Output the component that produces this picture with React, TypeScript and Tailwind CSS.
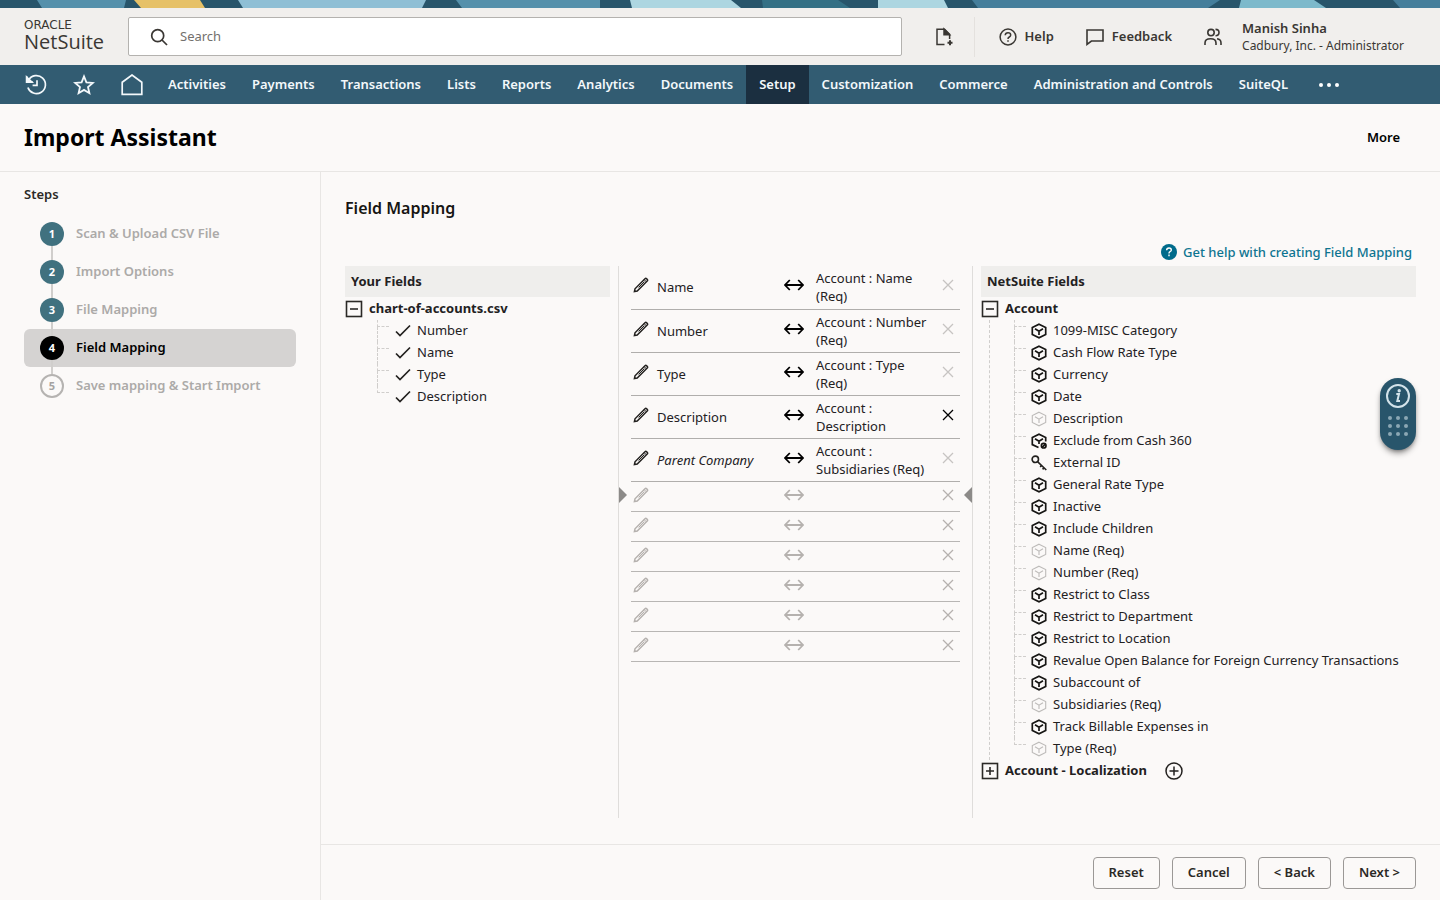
import type { ReactNode } from 'react';

const NAV_ITEMS = [
  'Activities', 'Payments', 'Transactions', 'Lists', 'Reports', 'Analytics', 'Documents',
  'Setup', 'Customization', 'Commerce', 'Administration and Controls', 'SuiteQL',
];

const STEPS = [
  'Scan & Upload CSV File', 'Import Options', 'File Mapping', 'Field Mapping', 'Save mapping & Start Import',
];
const CURRENT_STEP = 4;

const CSV_FIELDS = ['Number', 'Name', 'Type', 'Description'];

type Mapping = { source: string; target: string; custom?: boolean; removable?: boolean };

const MAPPINGS: Mapping[] = [
  { source: 'Name', target: 'Account : Name (Req)' },
  { source: 'Number', target: 'Account : Number (Req)' },
  { source: 'Type', target: 'Account : Type (Req)' },
  { source: 'Description', target: 'Account : Description', removable: true },
  { source: 'Parent Company', target: 'Account : Subsidiaries (Req)', custom: true },
];
const EMPTY_ROWS = [1, 2, 3, 4, 5, 6];

type Field = { name: string; kind?: 'used' | 'excluded' | 'key' };

const ACCOUNT_FIELDS: Field[] = [
  { name: '1099-MISC Category' },
  { name: 'Cash Flow Rate Type' },
  { name: 'Currency' },
  { name: 'Date' },
  { name: 'Description', kind: 'used' },
  { name: 'Exclude from Cash 360', kind: 'excluded' },
  { name: 'External ID', kind: 'key' },
  { name: 'General Rate Type' },
  { name: 'Inactive' },
  { name: 'Include Children' },
  { name: 'Name (Req)', kind: 'used' },
  { name: 'Number (Req)', kind: 'used' },
  { name: 'Restrict to Class' },
  { name: 'Restrict to Department' },
  { name: 'Restrict to Location' },
  { name: 'Revalue Open Balance for Foreign Currency Transactions' },
  { name: 'Subaccount of' },
  { name: 'Subsidiaries (Req)', kind: 'used' },
  { name: 'Track Billable Expenses in' },
  { name: 'Type (Req)', kind: 'used' },
];

function Banner() {
  return (
    <svg className="block h-2 w-full" viewBox="0 0 1440 8" preserveAspectRatio="none" aria-hidden="true">
      <rect width="1440" height="8" fill="#28556b" />
      <path d="M37 0H126L124 8H42Z" fill="#5590ab" />
      <path d="M134 0H200L205 8H141Z" fill="#e6c168" />
      <path d="M238 0H426L422 8H243Z" fill="#8fbfd5" />
      <path d="M456 0H600V8H462Z" fill="#5590ab" />
      <path d="M630 0H731L741 8H632Z" fill="#add6e1" />
      <path d="M762 0H838L850 8H763Z" fill="#347085" />
      <path d="M878 0H944L948 8H878Z" fill="#add6e1" />
      <path d="M972 0H1220L1208 8H978Z" fill="#457e9b" />
      <path d="M1241 0H1314L1326 8H1239Z" fill="#7db9cb" />
      <path d="M1393 0H1440V8H1400Z" fill="#457e9b" />
    </svg>
  );
}

function Stroke({ children, className, width = 1.5, box = '0 0 20 20' }: { children: ReactNode; className: string; width?: number; box?: string }) {
  return (
    <svg viewBox={box} className={className} fill="none" stroke="currentColor" strokeWidth={width} aria-hidden="true">
      {children}
    </svg>
  );
}

function Pencil() {
  return (
    <Stroke className="size-4" box="0 0 16 16" width={1.5}>
      <path d="M1.4 14.6L2 11.8L12 1.8Q12.8 1 13.6 1.8L14.2 2.4Q15 3.2 14.2 4L4.2 14Z" />
      <path d="M11.4 4.6L5.6 10.4" strokeWidth="1" />
      <path d="M11.2 2.6L13.4 4.8" strokeWidth="1" />
    </Stroke>
  );
}

function DoubleArrow() {
  return (
    <Stroke className="h-3 w-5" box="0 0 20 12" width={1.8}>
      <path d="M1.3 6H18.7M5.8 1L1 6L5.8 11M14.2 1L19 6L14.2 11" />
    </Stroke>
  );
}

function Cross() {
  return (
    <Stroke className="size-3" box="0 0 12 12" width={1.3}>
      <path d="M1 1L11 11M11 1L1 11" />
    </Stroke>
  );
}

function FieldIcon({ kind }: { kind?: Field['kind'] }) {
  if (kind === 'key') {
    return (
      <Stroke className="size-4" box="0 0 16 16" width={1.6}>
        <circle cx="4.3" cy="4.3" r="3.2" />
        <path d="M6.8 6.8L15.3 15M10.6 10.4L9.2 12M13 12.8L11.6 14.4" />
      </Stroke>
    );
  }
  const used = kind === 'used';
  return (
    <span className={used ? 'text-[#bdbbb9]' : 'text-[#161513]'}>
      <Stroke className="size-4" box="0 0 16 16" width={used ? 1.1 : 1.7}>
        {kind === 'excluded' ? (
          <>
            <path d="M7.5 14.6L1.3 11.6V4.5L8 1.2L14.7 4.5V8.5M4 5.8L8 8.2L12 5.8M8 8.2V11" />
            <circle cx="12.7" cy="12.7" r="2.3" />
            <path d="M11.1 14.3L14.3 11.1" />
          </>
        ) : (
          <path d="M8 1.2L14.7 4.6V11.4L8 14.8L1.3 11.4V4.6ZM4 5.8L8 8.2L12 5.8M8 8.2V12" />
        )}
      </Stroke>
    </span>
  );
}

function BoxToggle({ open, label }: { open: boolean; label: string }) {
  return (
    <button type="button" aria-label={label} aria-expanded={open} className="text-[#2b2926]">
      <Stroke className="size-[18px]" box="0 0 18 18" width={1.6}>
        <rect x="1.5" y="1.5" width="15" height="15" />
        <path d={open ? 'M5 9H13' : 'M5 9H13M9 5V13'} />
      </Stroke>
    </button>
  );
}

function Branch({ last }: { last: boolean }) {
  return (
    <span className="flex w-3 flex-col self-stretch" aria-hidden="true">
      <span className="h-[7px] border-b border-l border-dashed border-[#d0cecc]" />
      {!last && <span className="flex-1 border-l border-dashed border-[#d0cecc]" />}
    </span>
  );
}

function Header() {
  return (
    <header className="flex h-[57px] items-center bg-[#f1efed] pr-9 pl-6 text-[#3a3733]">
      <a href="#home" className="flex w-[104px] shrink-0 flex-col pb-1 text-[#3a3733]">
        <span className="font-['DejaVu_Sans'] text-[12px] leading-[14px]">ORACLE</span>
        <span className="font-['Open_Sans'] text-[20px] leading-5">NetSuite</span>
      </a>
      <label className="flex h-[39px] min-w-0 flex-1 items-center gap-3 rounded-xs border border-[#b4b2af] bg-white px-[21px]">
        <Stroke className="size-[18px] shrink-0" box="0 0 18 18" width={1.7}>
          <circle cx="7.7" cy="7.7" r="6" />
          <path d="M12 12L17 17" />
        </Stroke>
        <input type="search" aria-label="Search" placeholder="Search" className="w-full text-[13px] outline-none placeholder:text-[#73706d]" />
      </label>
      <button type="button" aria-label="Create new" className="ml-8">
        <Stroke className="size-5" box="0 0 20 20" width={1.5}>
          <path d="M10.5 17.4H3V2.2H10.5L15.6 7.4V12" />
          <path d="M10 2V7.8H15.6Z" fill="currentColor" />
          <path d="M16 13.2V18.2M13.5 15.7H18.5" strokeWidth="2" />
        </Stroke>
      </button>
      <span className="mr-6 ml-5 h-10 w-px bg-[#e4e1de]" />
      <button type="button" className="flex items-center gap-2 text-[13px] font-semibold">
        <Stroke className="size-[18px]" box="0 0 18 18" width={1.5}>
          <circle cx="9" cy="9" r="7.9" />
          <path d="M6.2 7.2Q6.4 4.8 9 4.8Q11.7 4.8 11.7 7Q11.7 8.2 10.3 9Q9 9.7 9 11M9 12.2V13.7" />
        </Stroke>
        Help
      </button>
      <button type="button" className="ml-8 flex items-center gap-2 text-[13px] font-semibold">
        <Stroke className="size-[18px]" box="0 0 18 18" width={1.6}>
          <path d="M1 2H17V13H5.4L1 16.4Z" />
        </Stroke>
        Feedback
      </button>
      <button type="button" className="ml-8 flex items-center gap-5 text-left">
        <Stroke className="size-[18px]" box="0 0 18 18" width={1.6}>
          <circle cx="7" cy="4.6" r="3.2" />
          <path d="M1 17V15Q1 10.8 6.5 10.8Q12 10.8 12 15V17M11.5 1.4Q15 1.4 15 4.6Q15 7.8 11.5 7.8M13 10.8Q17 11.4 17 15V17" />
        </Stroke>
        <span className="flex flex-col">
          <span className="text-[13px] leading-[18px] font-semibold">Manish Sinha</span>
          <span className="text-[12px] leading-[18px]">Cadbury, Inc. - Administrator</span>
        </span>
      </button>
    </header>
  );
}

function MainNav() {
  return (
    <nav className="flex h-[39px] items-stretch bg-[#325c72] text-[13px] font-semibold text-[#f3f8fb]">
      <div className="flex items-center gap-[26px] pr-3 pl-[25px]">
        <a href="#recent" aria-label="Recent records">
          <Stroke className="size-[22px]" box="0 0 22 22" width={1.7}>
            <path d="M3.6 6.2A9 9 0 1 1 2.9 13.4M2 2.4V7.8H7.6M12 6.2V11.4H7.6" />
            <path d="M1.6 3L7 8.2H1.6Z" fill="currentColor" />
          </Stroke>
        </a>
        <a href="#shortcuts" aria-label="Shortcuts">
          <Stroke className="size-[22px]" box="0 0 22 22" width={1.8}>
            <path d="M11 2.4L13.4 8.4L19.8 8.9L15 13L16.4 19.2L11 15.9L5.6 19.2L7 13L2.2 8.9L8.6 8.4Z" />
          </Stroke>
        </a>
        <a href="#home" aria-label="Home">
          <Stroke className="size-[22px]" box="0 0 22 22" width={1.7}>
            <path d="M1.2 20.4V8.2L11 1L20.8 8.2V20.4Z" />
          </Stroke>
        </a>
      </div>
      {NAV_ITEMS.map((item) => (
        <a
          key={item}
          href={`#${item}`}
          className={`flex items-center px-[13px] whitespace-nowrap ${item === 'Setup' ? 'bg-[#1b2f40]' : ''}`}
        >
          {item}
        </a>
      ))}
      <button type="button" aria-label="More menus" className="flex items-center gap-1 px-[18px]">
        <span className="size-1 rounded-full bg-white" />
        <span className="size-1 rounded-full bg-white" />
        <span className="size-1 rounded-full bg-white" />
      </button>
    </nav>
  );
}

function Steps() {
  return (
    <aside className="w-[321px] shrink-0 border-r border-[#e8e6e4] px-6 pt-3">
      <h2 className="text-[13px] leading-5 font-semibold">Steps</h2>
      <ol className="mt-[11px] text-[13px] font-semibold">
        {STEPS.map((step, index) => {
          const number = index + 1;
          const current = number === CURRENT_STEP;
          const upcoming = number > CURRENT_STEP;
          return (
            <li
              key={step}
              aria-current={current ? 'step' : undefined}
              className={`flex h-[38px] items-center gap-3 rounded-md pl-4 ${current ? 'bg-[#d5d3d2] text-black' : 'text-[#acaaa8]'}`}
            >
              <span className="flex flex-col items-center self-stretch">
                <span className={`w-0.5 flex-1 ${index === 0 ? '' : 'bg-[#d0cecc]'}`} />
                <span
                  className={`flex size-6 items-center justify-center rounded-full text-[11px] font-bold ${
                    current ? 'bg-black text-white' : upcoming ? 'border-2 border-[#b5b3b1] text-[#a5a3a1]' : 'bg-[#40717f] text-white'
                  }`}
                >
                  {number}
                </span>
                <span className={`w-0.5 flex-1 ${upcoming ? '' : 'bg-[#d0cecc]'}`} />
              </span>
              {step}
            </li>
          );
        })}
      </ol>
    </aside>
  );
}

function SourceTree() {
  return (
    <section className="w-[265px] shrink-0 text-[13px]">
      <h3 className="flex h-[31px] items-center bg-[#efeeec] px-1.5 font-bold">Your Fields</h3>
      <div className="mt-px flex h-[22px] items-center gap-1.5 font-bold">
        <BoxToggle open label="Toggle chart-of-accounts.csv" />
        chart-of-accounts.csv
      </div>
      <ul className="pl-8">
        {CSV_FIELDS.map((field, index) => (
          <li key={field} className="flex h-[22px] items-center">
            <Branch last={index === CSV_FIELDS.length - 1} />
            <Stroke className="mr-1.5 ml-1.5 size-4" box="0 0 16 16" width={1.7}>
              <path d="M1 8.5L5 12.5L15 2.5" />
            </Stroke>
            {field}
          </li>
        ))}
      </ul>
    </section>
  );
}

function MappingTable() {
  return (
    <section className="relative ml-2 min-h-[552px] w-[355px] shrink-0 border-x border-[#dfdddb] px-3">
      <button type="button" aria-label="Add source field" className="absolute top-[221px] left-0 text-[#8c8a88]">
        <svg viewBox="0 0 8 16" className="h-4 w-2" fill="currentColor" aria-hidden="true"><path d="M0 0L8 8L0 16Z" /></svg>
      </button>
      <button type="button" aria-label="Add target field" className="absolute top-[221px] right-0 text-[#8c8a88]">
        <svg viewBox="0 0 8 16" className="h-4 w-2" fill="currentColor" aria-hidden="true"><path d="M8 0L0 8L8 16Z" /></svg>
      </button>
      <table className="w-full table-fixed text-[13px] leading-[18px]">
        <colgroup>
          <col className="w-[26px]" />
          <col />
          <col className="w-8" />
          <col className="w-[120px]" />
          <col className="w-6" />
        </colgroup>
        <tbody>
          {MAPPINGS.map((row) => (
            <tr key={row.source} className="h-[43px] border-b border-[#b0aeac]">
              <td className="p-0 pb-1 pl-0.5">
                <button type="button" aria-label={`Edit ${row.source}`} className="block"><Pencil /></button>
              </td>
              <td className={`p-0 ${row.custom ? 'italic' : ''}`}>{row.source}</td>
              <td className="p-0 pb-1 text-black"><DoubleArrow /></td>
              <td className="p-0 pr-1">{row.target}</td>
              <td className="p-0 pb-1">
                <button type="button" aria-label={`Remove ${row.source}`} className={`ml-1.5 block ${row.removable ? 'text-black' : 'text-[#c6c4c2]'}`}>
                  <Cross />
                </button>
              </td>
            </tr>
          ))}
          {EMPTY_ROWS.map((row) => (
            <tr key={row} className="h-[30px] border-b border-[#b8b6b4] text-[#b5b1ae]">
              <td className="p-0 pb-0.5 pl-0.5">
                <button type="button" aria-label={`Edit empty row ${row}`} className="block"><Pencil /></button>
              </td>
              <td className="p-0" />
              <td className="p-0 pb-0.5"><DoubleArrow /></td>
              <td className="p-0" />
              <td className="p-0 pb-0.5">
                <button type="button" aria-label={`Remove empty row ${row}`} className="ml-1.5 block"><Cross /></button>
              </td>
            </tr>
          ))}
        </tbody>
      </table>
    </section>
  );
}

function TargetTree() {
  return (
    <section className="ml-2 min-w-0 flex-1 text-[13px] whitespace-nowrap">
      <h3 className="flex h-[31px] items-center bg-[#efeeec] px-1.5 font-bold">NetSuite Fields</h3>
      <div className="mt-px flex h-[22px] items-center gap-1.5 font-bold">
        <BoxToggle open label="Toggle Account" />
        Account
      </div>
      <ul className="ml-2 border-l border-dashed border-[#d0cecc] pl-6">
        {ACCOUNT_FIELDS.map((field, index) => (
          <li key={field.name} className="flex h-[22px] items-center">
            <Branch last={index === ACCOUNT_FIELDS.length - 1} />
            <span className="mr-1.5 ml-[5px] shrink-0"><FieldIcon kind={field.kind} /></span>
            {field.name}
          </li>
        ))}
      </ul>
      <div className="flex h-[22px] items-center gap-1.5 font-bold">
        <BoxToggle open={false} label="Toggle Account - Localization" />
        Account - Localization
        <button type="button" aria-label="Add Account - Localization" className="ml-3">
          <Stroke className="size-[18px]" box="0 0 18 18" width={1.5}>
            <circle cx="9" cy="9" r="8" />
            <path d="M4.5 9H13.5M9 4.5V13.5" />
          </Stroke>
        </button>
      </div>
    </section>
  );
}

function HelpWidget() {
  return (
    <div className="absolute top-[378px] right-6 flex h-[72px] w-9 flex-col items-center gap-2 rounded-full bg-[#28556b] pt-1.5 text-[#d3e3ea] shadow-md shadow-black/40">
      <button type="button" aria-label="Page information">
        <Stroke className="size-6" box="0 0 24 24" width={2}>
          <circle cx="12" cy="12" r="11" />
          <path d="M10.3 10H13L11.3 17H14" />
          <circle cx="13.2" cy="6.7" r="0.7" fill="currentColor" />
        </Stroke>
      </button>
      <span className="grid grid-cols-3 gap-1" aria-hidden="true">
        {[1, 2, 3, 4, 5, 6, 7, 8, 9].map((dot) => (
          <span key={dot} className="size-1 rounded-full bg-[#8ba7b4]" />
        ))}
      </span>
    </div>
  );
}

export default function App() {
  return (
    <div className="relative flex min-h-screen flex-col bg-[#fbf9f8] font-['Noto_Sans',sans-serif] text-[#2b2926]">
      <Banner />
      <Header />
      <MainNav />
      <div className="flex h-[68px] items-center justify-between border-b border-[#e8e6e4] pr-10 pl-6 text-black">
        <h1 className="text-[23px] font-bold">Import Assistant</h1>
        <button type="button" className="text-[13px] font-semibold">More</button>
      </div>
      <div className="flex flex-1">
        <Steps />
        <main className="flex min-w-0 flex-1 flex-col">
          <div className="flex-1 px-6">
            <h2 className="pt-6 text-[16px] leading-6 font-semibold text-[#161513]">Field Mapping</h2>
            <div className="mt-5 flex justify-end pr-1">
              <a href="#help" className="flex items-center gap-1.5 text-[13px] leading-6 font-medium text-[#0e7490]">
                <svg viewBox="0 0 16 16" className="size-4" aria-hidden="true">
                  <circle cx="8" cy="8" r="8" fill="#006b8b" />
                  <path d="M5.6 6.2Q5.8 4 8 4Q10.3 4 10.3 5.9Q10.3 7 9 7.7Q8 8.2 8 9.4M8 10.6V12.2" fill="none" stroke="#fff" strokeWidth="1.4" />
                </svg>
                Get help with creating Field Mapping
              </a>
            </div>
            <div className="mt-0.5 flex text-[#23211f]">
              <SourceTree />
              <MappingTable />
              <TargetTree />
            </div>
          </div>
          <footer className="flex h-14 items-center justify-end gap-3 border-t border-[#e8e6e4] px-6 text-[13px] font-semibold">
            <button type="button" className="h-8 rounded-sm border border-[#9b9896] px-[15px]">Reset</button>
            <button type="button" className="h-8 rounded-sm border border-[#9b9896] px-[15px]">Cancel</button>
            <button type="button" className="h-8 rounded-sm border border-[#9b9896] px-[15px]">&lt; Back</button>
            <button type="button" className="h-8 rounded-sm border border-[#9b9896] px-[15px]">Next &gt;</button>
          </footer>
        </main>
      </div>
      <HelpWidget />
    </div>
  );
}
